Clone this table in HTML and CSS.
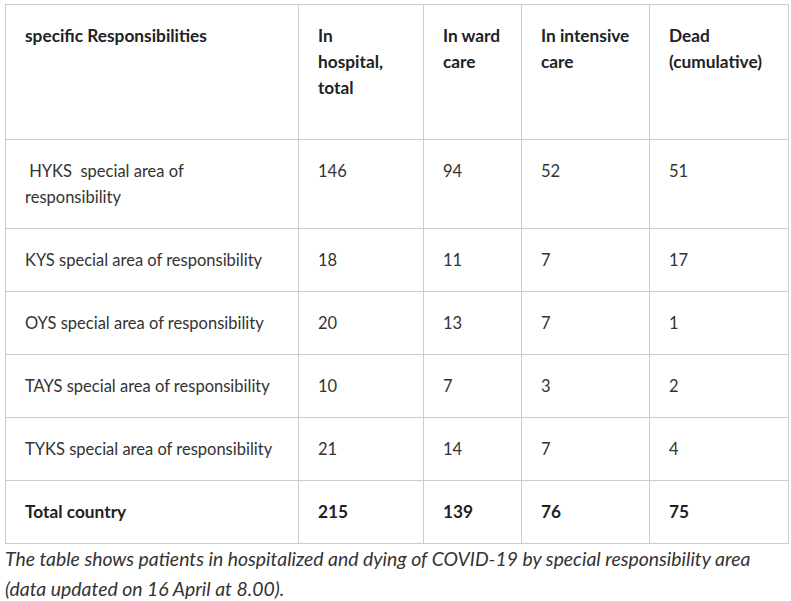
FILE: index.html
```html
<!DOCTYPE html>
<html lang="en">
<head>
<meta charset="utf-8">
<link rel="stylesheet" href="styles.css">
</head>
<body>
<div class="wrap">
  <table class="data">
    <colgroup>
      <col class="c1"><col class="c2"><col class="c3"><col class="c4"><col class="c5">
    </colgroup>
    <thead>
      <tr>
        <th>specific Responsibilities</th>
        <th>In<br>hospital,<br>total</th>
        <th>In ward<br>care</th>
        <th>In intensive<br>care</th>
        <th>Dead<br>(cumulative)</th>
      </tr>
    </thead>
    <tbody>
      <tr><td>&nbsp;HYKS&nbsp; special area of<br>responsibility</td><td>146</td><td>94</td><td>52</td><td>51</td></tr>
      <tr><td>KYS special area of responsibility</td><td>18</td><td>11</td><td>7</td><td>17</td></tr>
      <tr><td>OYS special area of responsibility</td><td>20</td><td>13</td><td>7</td><td>1</td></tr>
      <tr><td>TAYS special area of responsibility</td><td>10</td><td>7</td><td>3</td><td>2</td></tr>
      <tr><td>TYKS special area of responsibility</td><td>21</td><td>14</td><td>7</td><td>4</td></tr>
      <tr class="total"><td>Total country</td><td>215</td><td>139</td><td>76</td><td>75</td></tr>
    </tbody>
  </table>
  <p class="caption">The table shows patients in hospitalized and dying of COVID-19 by special responsibility area<br>(data updated on 16 April at 8.00).</p>
</div>
</body>
</html>
```

FILE: styles.css
```css
html, body {
  margin: 0;
  padding: 0;
  background: #ffffff;
}
body {
  font-family: Lato, "Open Sans", sans-serif;
  color: #333333;
}
.wrap {
  padding: 4px 0 0 5px;
  width: 783px;
}
.data {
  border-collapse: collapse;
  table-layout: fixed;
  width: 783px;
  font-size: 16.5px;
  line-height: 26px;
}
.c1 { width: 293px; }
.c2 { width: 125px; }
.c3 { width: 98px; }
.c4 { width: 128px; }
.c5 { width: 139px; }
.data th,
.data td {
  border: 1px solid #cccccc;
  padding: 18px 12px 18px 19px;
  vertical-align: top;
  text-align: left;
  white-space: nowrap;
}
.data th {
  font-size: 17.3px;
  font-weight: 700;
  color: #222222;
  padding-bottom: 38px;
}
.data .total td {
  font-size: 17.3px;
  font-weight: 700;
  color: #222222;
}
.caption {
  margin: 0;
  font-style: italic;
  font-size: 19.4px;
  line-height: 30px;
  color: #333333;
  white-space: nowrap;
}
```
